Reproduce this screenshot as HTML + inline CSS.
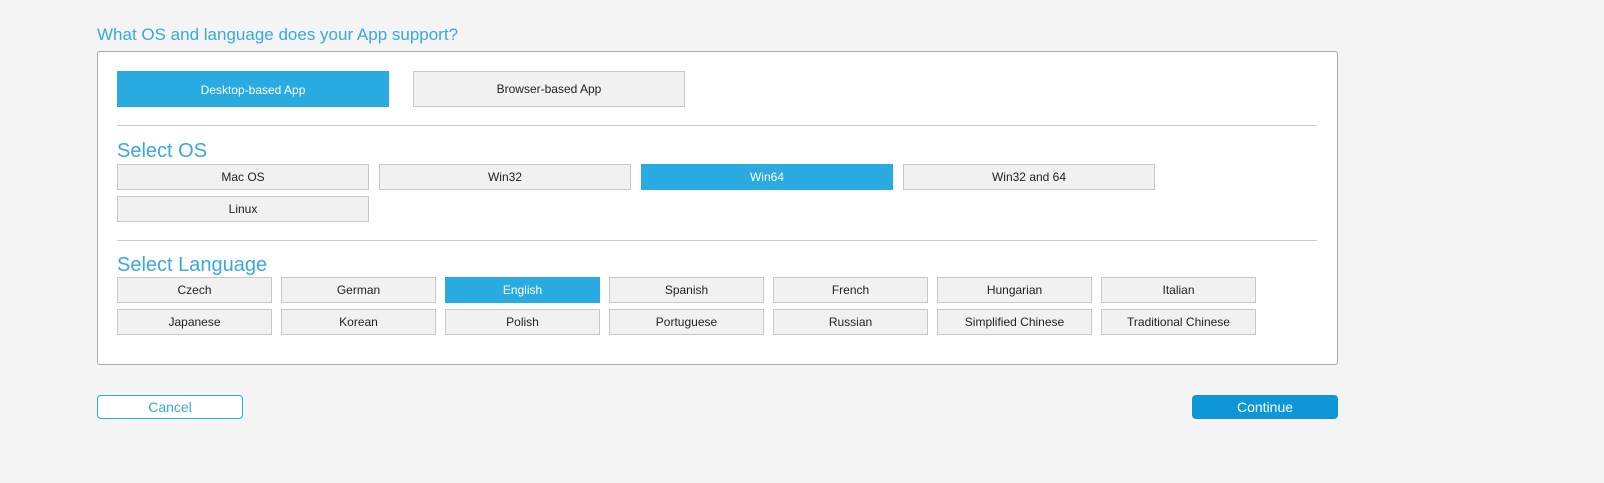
<!DOCTYPE html>
<html><head><style>
body{margin:0;width:1604px;height:483px;background:#f4f4f4;font-family:"Liberation Sans",sans-serif;position:relative;overflow:hidden}
.a{position:absolute;box-sizing:border-box}
.t{left:97px;top:25px;font-size:17px;color:#3aa8de}
.panel{left:97px;top:51px;width:1241px;height:314px;background:#fff;border:1px solid #aaa;border-radius:3px}
.b{position:absolute;box-sizing:border-box;background:#f1f1f1;border:1px solid #c8c8c8;color:#222;font-size:12px;text-align:center}
.s{background:#29abe2;border-color:#29abe2;color:#fff}
.hr{height:1px;background:#ccc;left:117px;width:1200px}
.h{font-size:20px;color:#3aa8de;left:117px}
.os{width:252px;height:26px;line-height:24px}
.ln{width:155px;height:26px;line-height:24px}
</style></head><body>
<div class="a t">What OS and language does your App support?</div>
<div class="a panel"></div>
<div class="b s" style="left:117px;top:71px;width:272px;height:36px;line-height:36px">Desktop-based App</div>
<div class="b" style="left:413px;top:71px;width:272px;height:36px;line-height:34px">Browser-based App</div>
<div class="a hr" style="top:125px"></div>
<div class="a h" style="top:140px">Select OS</div>
<div class="b os" style="left:117px;top:164px">Mac OS</div>
<div class="b os" style="left:379px;top:164px">Win32</div>
<div class="b os s" style="left:641px;top:164px">Win64</div>
<div class="b os" style="left:903px;top:164px">Win32 and 64</div>
<div class="b os" style="left:117px;top:196px">Linux</div>
<div class="a hr" style="top:240px"></div>
<div class="a h" style="top:254px">Select Language</div>
<div class="b ln" style="left:117px;top:277px">Czech</div>
<div class="b ln" style="left:281px;top:277px">German</div>
<div class="b ln s" style="left:445px;top:277px">English</div>
<div class="b ln" style="left:609px;top:277px">Spanish</div>
<div class="b ln" style="left:773px;top:277px">French</div>
<div class="b ln" style="left:937px;top:277px">Hungarian</div>
<div class="b ln" style="left:1101px;top:277px">Italian</div>
<div class="b ln" style="left:117px;top:309px">Japanese</div>
<div class="b ln" style="left:281px;top:309px">Korean</div>
<div class="b ln" style="left:445px;top:309px">Polish</div>
<div class="b ln" style="left:609px;top:309px">Portuguese</div>
<div class="b ln" style="left:773px;top:309px">Russian</div>
<div class="b ln" style="left:937px;top:309px">Simplified Chinese</div>
<div class="b ln" style="left:1101px;top:309px">Traditional Chinese</div>
<div class="a" style="left:97px;top:395px;width:146px;height:24px;border:1px solid #29abe2;border-radius:4px;background:#fff;color:#3aa8de;font-size:14px;text-align:center;line-height:22px">Cancel</div>
<div class="a" style="left:1192px;top:395px;width:146px;height:24px;border-radius:4px;background:#0f96d6;color:#fff;font-size:14px;text-align:center;line-height:24px">Continue</div>
</body></html>
